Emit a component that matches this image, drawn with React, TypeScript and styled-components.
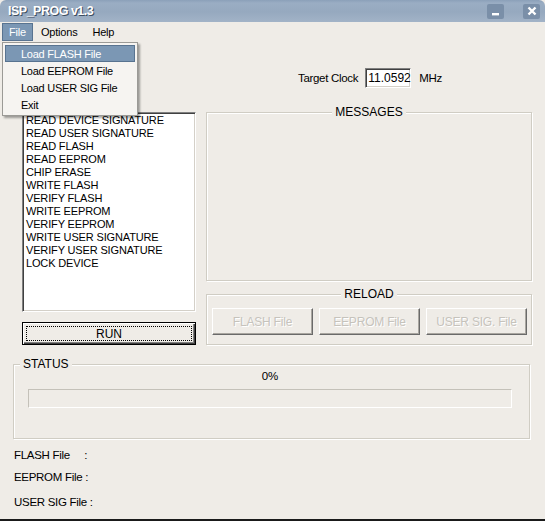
import React from "react";
import styled, { createGlobalStyle } from "styled-components";

const Global = createGlobalStyle`
  html, body { margin: 0; padding: 0; background: #efece7; }
  body { font-family: "Liberation Sans", Arial, sans-serif; font-size: 11px; color: #000; }
  * { box-sizing: border-box; }
`;

const Window = styled.div`
  width: 545px;
  height: 521px;
  background: #efece7;
  display: flex;
  flex-direction: column;
  position: relative;
  border-bottom: 2px solid #1a1a1a;
  overflow: hidden;
`;

const TitleBar = styled.div`
  height: 22px;
  display: flex;
  align-items: center;
  padding: 0 5px 0 8px;
  background: linear-gradient(#8ba0b9 0px, #9aadc3 3px, #96a9bf 12px, #a2b3c7 22px);
  border-top-left-radius: 6px;
  border-top-right-radius: 6px;
`;

const Title = styled.div`
  flex: 1;
  color: #fff;
  font-weight: bold;
  font-size: 12.5px;
  letter-spacing: -0.5px;
  text-shadow: 1px 1px 0 #3c4c60;
`;

const TitleButton = styled.div<{ $gap?: number }>`
  width: 17px;
  height: 15px;
  margin-left: ${(p) => p.$gap ?? 0}px;
  background: #7a8fa8;
  border-radius: 2px;
  display: flex;
  align-items: center;
  justify-content: center;
`;

const MenuBar = styled.div`
  height: 19px;
  display: flex;
  align-items: stretch;
  padding: 1px 2px 0 2px;
`;

const MenuItem = styled.div<{ $active?: boolean }>`
  display: flex;
  align-items: center;
  padding: 0 6px 0 6px;
  margin-right: 1px;
  font-size: 11px;
  letter-spacing: -0.2px;
  color: ${(p) => (p.$active ? "#fff" : "#000")};
  background: ${(p) => (p.$active ? "#7b97b4" : "transparent")};
  border: 1px solid ${(p) => (p.$active ? "#587390" : "transparent")};
`;

const Dropdown = styled.div`
  position: absolute;
  left: 2px;
  top: 42px;
  width: 136px;
  padding: 2px 2px;
  background: #f6f4f1;
  border: 1px solid #9b9a96;
  box-shadow: 2px 2px 2px rgba(0, 0, 0, 0.35);
  z-index: 10;
`;

const DropItem = styled.div<{ $active?: boolean }>`
  height: 17px;
  display: flex;
  align-items: center;
  padding-left: 15px;
  font-size: 11px;
  letter-spacing: -0.25px;
  color: ${(p) => (p.$active ? "#fff" : "#000")};
  background: ${(p) => (p.$active ? "#7b97b4" : "transparent")};
  border: 1px solid ${(p) => (p.$active ? "#587390" : "transparent")};
`;

const Body = styled.div`
  flex: 1;
  display: flex;
  flex-direction: column;
`;

const TopSection = styled.div`
  display: grid;
  grid-template-columns: 174px 326px;
  column-gap: 10px;
  padding-left: 22px;
`;

const LeftCol = styled.div`
  display: flex;
  flex-direction: column;
  padding-top: 71px;
  gap: 10px;
`;

const ListBox = styled.div`
  height: 200px;
  background: #fff;
  border: 1px solid;
  border-color: #808080 #fff #fff #808080;
  box-shadow: inset 1px 1px 0 #404040, inset -1px -1px 0 #d4d0c8;
  padding: 1px 3px;
  display: flex;
  flex-direction: column;
`;

const ListItem = styled.div`
  height: 13px;
  line-height: 13px;
  font-size: 11px;
  letter-spacing: -0.15px;
  white-space: nowrap;
`;

const DefaultButton = styled.div`
  height: 23px;
  border: 1px solid #000;
  background: #efece7;
  box-shadow: inset 1px 1px 0 #fff, inset -1px -1px 0 #404040, inset -2px -2px 0 #808080;
  display: flex;
  align-items: stretch;
  padding: 3px;
`;

const FocusRect = styled.div`
  flex: 1;
  border: 1px dotted #000;
  display: flex;
  align-items: center;
  justify-content: center;
  font-size: 12px;
`;

const RightCol = styled.div`
  display: flex;
  flex-direction: column;
  padding-top: 27px;
`;

const ClockRow = styled.div`
  height: 20px;
  display: flex;
  align-items: center;
  justify-content: center;
  gap: 7px;
  padding-left: 2px;
  margin-bottom: 17px;
`;

const Label = styled.span`
  font-size: 11.5px;
  letter-spacing: -0.3px;
`;

const ClockInput = styled.div`
  width: 46px;
  height: 20px;
  background: #fff;
  border: 1px solid;
  border-color: #808080 #fff #fff #808080;
  box-shadow: inset 1px 1px 0 #404040, inset -1px -1px 0 #d4d0c8;
  display: flex;
  align-items: center;
  padding-left: 2px;
  font-size: 12px;
  margin-right: 1px;
`;

const Group = styled.fieldset<{ $h: number }>`
  margin: 0;
  height: ${(p) => p.$h}px;
  border: 1px solid #d0cdc4;
  box-shadow: inset 1px 1px 0 #fff, 1px 1px 0 #fff;
  padding: 0;
  min-width: 0;
`;

const CenterLegend = styled.legend`
  margin: 0 auto;
  padding: 0 3px;
  font-size: 12px;
  line-height: 14px;
  background: #efece7;
`;

const LeftLegend = styled.legend`
  margin-left: 6px;
  padding: 0 3px;
  font-size: 12px;
  line-height: 14px;
  background: #efece7;
`;

const Spacer = styled.div`
  height: 6px;
`;

const ReloadRow = styled.div`
  display: flex;
  gap: 6px;
  padding: 7px 0 0 5px;
`;

const DisabledButton = styled.div`
  width: 101px;
  height: 27px;
  border: 1px solid;
  border-color: #fff #6a6a6a #6a6a6a #fff;
  box-shadow: inset -1px -1px 0 #a9a6a0;
  display: flex;
  align-items: center;
  justify-content: center;
  color: #c6c3bc;
  text-shadow: 1px 1px 0 #fff;
  font-size: 12px;
  letter-spacing: -0.2px;
`;

const StatusWrap = styled.div`
  padding: 12px 15px 0 13px;
`;

const StatusInner = styled.div`
  display: flex;
  flex-direction: column;
  align-items: center;
  padding: 0 17px 0 14px;
`;

const Percent = styled.div`
  font-size: 11.5px;
  height: 14px;
  line-height: 14px;
  margin-top: -2px;
  margin-bottom: 6px;
`;

const Progress = styled.div`
  align-self: stretch;
  height: 19px;
  border: 1px solid;
  border-color: #c4c1b9 #fff #fff #c4c1b9;
`;

const FileList = styled.div`
  display: flex;
  flex-direction: column;
  padding: 5px 0 0 14px;
`;

const FileRow = styled.div<{ $h: number }>`
  height: ${(p) => p.$h}px;
  display: flex;
  align-items: center;
  font-size: 11.5px;
  letter-spacing: -0.3px;
  white-space: pre;
`;

const ops = [
  "READ DEVICE SIGNATURE",
  "READ USER SIGNATURE",
  "READ FLASH",
  "READ EEPROM",
  "CHIP ERASE",
  "WRITE FLASH",
  "VERIFY FLASH",
  "WRITE EEPROM",
  "VERIFY EEPROM",
  "WRITE USER SIGNATURE",
  "VERIFY USER SIGNATURE",
  "LOCK DEVICE",
];

export default function App() {
  return (
    <>
      <Global />
      <Window>
        <TitleBar>
          <Title>ISP_PROG v1.3</Title>
          <TitleButton>
            <svg width="9" height="9" viewBox="0 0 9 9">
              <rect x="1" y="6" width="7" height="2.4" fill="#fff" />
            </svg>
          </TitleButton>
          <TitleButton $gap={19}>
            <svg width="10" height="10" viewBox="0 0 10 10">
              <path d="M1.5 1.5 L8.5 8.5 M8.5 1.5 L1.5 8.5" stroke="#fff" strokeWidth="2.4" />
            </svg>
          </TitleButton>
        </TitleBar>
        <MenuBar>
          <MenuItem $active>File</MenuItem>
          <MenuItem>Options</MenuItem>
          <MenuItem>Help</MenuItem>
        </MenuBar>
        <Dropdown>
          <DropItem $active>Load FLASH File</DropItem>
          <DropItem>Load EEPROM File</DropItem>
          <DropItem>Load USER SIG File</DropItem>
          <DropItem>Exit</DropItem>
        </Dropdown>
        <Body>
          <TopSection>
            <LeftCol>
              <ListBox>
                {ops.map((o) => (
                  <ListItem key={o}>{o}</ListItem>
                ))}
              </ListBox>
              <DefaultButton>
                <FocusRect>RUN</FocusRect>
              </DefaultButton>
            </LeftCol>
            <RightCol>
              <ClockRow>
                <Label>Target Clock</Label>
                <ClockInput>11.0592</ClockInput>
                <Label>MHz</Label>
              </ClockRow>
              <Group $h={176}>
                <CenterLegend>MESSAGES</CenterLegend>
              </Group>
              <Spacer />
              <Group $h={58}>
                <CenterLegend>RELOAD</CenterLegend>
                <ReloadRow>
                  <DisabledButton>FLASH File</DisabledButton>
                  <DisabledButton>EEPROM File</DisabledButton>
                  <DisabledButton>USER SIG. File</DisabledButton>
                </ReloadRow>
              </Group>
            </RightCol>
          </TopSection>
          <StatusWrap>
            <Group $h={82}>
              <LeftLegend>STATUS</LeftLegend>
              <StatusInner>
                <Percent>0%</Percent>
                <Progress />
              </StatusInner>
            </Group>
          </StatusWrap>
          <FileList>
            <FileRow $h={21}>{"FLASH File     :"}</FileRow>
            <FileRow $h={24}>{"EEPROM File :"}</FileRow>
            <FileRow $h={26}>{"USER SIG File :"}</FileRow>
          </FileList>
        </Body>
      </Window>
    </>
  );
}
